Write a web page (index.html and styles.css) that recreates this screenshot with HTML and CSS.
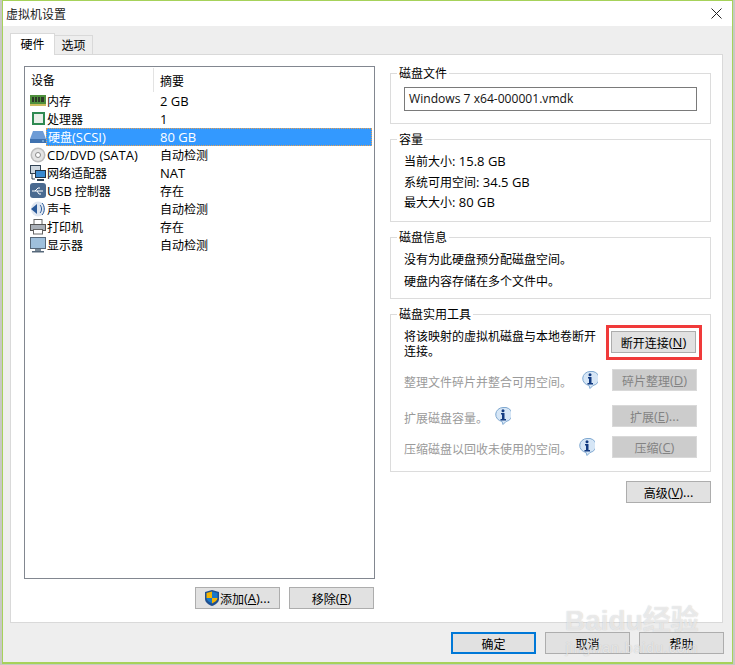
FILE: index.html
```html
<!DOCTYPE html>
<html lang="zh-CN">
<head>
<meta charset="utf-8">
<title>虚拟机设置</title>
<link rel="stylesheet" href="styles.css">
</head>
<body>
<div class="window">
  <header class="titlebar">
    <span class="title">虚拟机设置</span>
    <svg class="close" width="11" height="11" viewBox="0 0 11 11"><path d="M.5.5l10 10M10.500.5l-10 10" stroke="#222" fill="none"/></svg>
  </header>
  <div class="body">
    <nav class="tabs">
      <span class="tab active">硬件</span>
      <span class="tab">选项</span>
    </nav>
    <main class="panel">
      <section class="left">
        <div class="list">
          <div class="list-head"><span class="col1">设备</span><span class="col2">摘要</span></div>
          <div class="row"><span class="col1"><svg class="ic" viewBox="0 0 16 16"><rect x="0" y="2" width="16" height="9" fill="#4e8f3c"/><path d="M2 4h2v5H2zM5 4h2v5H5zM8 4h2v5H8zM11 4h3v5h-3z" fill="#2d3a28"/><rect x="0" y="11" width="16" height="2" fill="#c9bb5e"/></svg><span>内存</span></span><span class="col2 lat">2 GB</span></div>
          <div class="row"><span class="col1"><svg class="ic" viewBox="0 0 16 16"><rect x="2" y="1" width="13" height="13" fill="#2f8a52"/><rect x="4" y="3" width="9" height="9" fill="#e9efe9"/></svg><span>处理器</span></span><span class="col2 lat">1</span></div>
          <div class="row selected"><span class="col1"><svg class="ic" viewBox="0 0 16 16"><path d="M3 2h10l3 8v4H0v-4z" fill="#6d9cd6"/><path d="M0 10h16v4H0z" fill="#3f72b0"/><path d="M12 11.500h2v1h-2z" fill="#9fd0f5"/></svg><span class="sel-bar"><span class="sel-text">硬盘<span class="lat">(SCSI)</span></span><span class="sel-val lat">80 GB</span></span></span></div>
          <div class="row"><span class="col1"><svg class="ic" viewBox="0 0 16 16"><circle cx="8" cy="8" r="7.500" fill="#bdbdbd"/><circle cx="8" cy="8" r="6" fill="#e4e4e4"/><circle cx="8" cy="8" r="2.500" fill="#fff" stroke="#8a8a8a"/></svg><span class="lat">CD/DVD (SATA)</span></span><span class="col2">自动检测</span></div>
          <div class="row"><span class="col1"><svg class="ic" viewBox="0 0 16 16"><rect x="0.500" y="0.500" width="10" height="8" fill="#cfd8e0" stroke="#345"/><rect x="5.500" y="5.500" width="10" height="7" fill="#3a8ad0" stroke="#234"/><path d="M7 15h7" stroke="#345" stroke-width="2"/><path d="M2 9v5h3" stroke="#345" fill="none"/></svg><span>网络适配器</span></span><span class="col2 lat">NAT</span></div>
          <div class="row"><span class="col1"><svg class="ic" viewBox="0 0 16 16"><rect width="16" height="15" rx="3" fill="#4a6a90"/><path d="M2 8h11M5 8l3-3h2M7 8l2 3h2" stroke="#fff" fill="none"/></svg><span><span class="lat">USB</span> 控制器</span></span><span class="col2">存在</span></div>
          <div class="row"><span class="col1"><svg class="ic" viewBox="0 0 16 16"><ellipse cx="8" cy="8" rx="7" ry="7.500" fill="#dfe6f0"/><path d="M1 8l6-5v10z" fill="#2a5a9a"/><path d="M10 4c2 2 2 6 0 8M12 2c3 3 3 9 0 12" stroke="#2a5a9a" fill="none"/></svg><span>声卡</span></span><span class="col2">自动检测</span></div>
          <div class="row"><span class="col1"><svg class="ic" viewBox="0 0 16 16"><rect x="4" y="0.500" width="8" height="5" fill="#fff" stroke="#666"/><rect x="0.500" y="5.500" width="15" height="6" fill="#aab0b8" stroke="#555"/><rect x="3.500" y="10.500" width="9" height="4.500" fill="#fff" stroke="#666"/></svg><span>打印机</span></span><span class="col2">存在</span></div>
          <div class="row"><span class="col1"><svg class="ic" viewBox="0 0 16 16"><rect x="0.500" y="0.500" width="15" height="11" fill="#9fc0dc" stroke="#56687a"/><path d="M5 12h6v2H5z" fill="#7a8a98"/><path d="M2 14h12v1.500H2z" fill="#56687a"/></svg><span>显示器</span></span><span class="col2">自动检测</span></div>
        </div>
        <div class="list-actions">
          <button class="btn"><svg class="shield" viewBox="0 0 14 16"><path d="M7 0l7 2v7c0 3-3 5.500-7 7-4-1.500-7-4-7-7V2z" fill="#1f4f8f"/><path d="M7 1.500V8H1.500V3z" fill="#f4b400"/><path d="M7 8h5.500c-.3 2.500-2.500 4-5.500 5.500z" fill="#f4b400"/><path d="M7 1.500l5.500 1.500v5H7z" fill="#1a78c8"/><path d="M1.500 8H7v5.500C4 12 1.800 10.500 1.500 8z" fill="#1a78c8"/></svg>添加<span class="lat">(<u>A</u>)...</span></button>
          <button class="btn">移除<span class="lat">(<u>R</u>)</span></button>
        </div>
      </section>
      <section class="right">
        <fieldset class="group g-file">
          <legend>磁盘文件</legend>
          <div class="input">Windows 7 x64-000001.vmdk</div>
        </fieldset>
        <fieldset class="group g-cap">
          <legend>容量</legend>
          <p>当前大小<span class="lat">: 15.8 GB</span></p>
          <p>系统可用空间<span class="lat">: 34.5 GB</span></p>
          <p>最大大小<span class="lat">: 80 GB</span></p>
        </fieldset>
        <fieldset class="group g-info">
          <legend>磁盘信息</legend>
          <p>没有为此硬盘预分配磁盘空间。</p>
          <p>硬盘内容存储在多个文件中。</p>
        </fieldset>
        <fieldset class="group g-util">
          <legend>磁盘实用工具</legend>
          <div class="util first">
            <span class="util-text wrap">将该映射的虚拟机磁盘与本地卷断开连接。</span>
            <span class="highlight"><button class="btn">断开连接<span class="lat">(<u>N</u>)</span></button></span>
          </div>
          <div class="util off u2">
            <span class="util-text">整理文件碎片并整合可用空间。</span>
            <svg class="info i1" viewBox="0 0 16 18"><path d="M8 .5a7.500 7 0 0 1 3 14L8 17.500l-1-3.100A7.500 7 0 0 1 8 .5z" fill="#d6e6f6" stroke="#7fa8d0"/><circle cx="8" cy="3.800" r="1.500" fill="#123a80"/><path d="M6 6h3.500v6H11v1.500H5.500V12H7V7.500H6z" fill="#123a80"/></svg>
            <button class="btn" disabled>碎片整理<span class="lat">(<u>D</u>)</span></button>
          </div>
          <div class="util off u3">
            <span class="util-text">扩展磁盘容量。</span>
            <svg class="info i2" viewBox="0 0 16 18"><path d="M8 .5a7.500 7 0 0 1 3 14L8 17.500l-1-3.100A7.500 7 0 0 1 8 .5z" fill="#d6e6f6" stroke="#7fa8d0"/><circle cx="8" cy="3.800" r="1.500" fill="#123a80"/><path d="M6 6h3.500v6H11v1.500H5.500V12H7V7.500H6z" fill="#123a80"/></svg>
            <button class="btn" disabled>扩展<span class="lat">(<u>E</u>)...</span></button>
          </div>
          <div class="util off u4">
            <span class="util-text">压缩磁盘以回收未使用的空间。</span>
            <svg class="info i3" viewBox="0 0 16 18"><path d="M8 .5a7.500 7 0 0 1 3 14L8 17.500l-1-3.100A7.500 7 0 0 1 8 .5z" fill="#d6e6f6" stroke="#7fa8d0"/><circle cx="8" cy="3.800" r="1.500" fill="#123a80"/><path d="M6 6h3.500v6H11v1.500H5.500V12H7V7.500H6z" fill="#123a80"/></svg>
            <button class="btn" disabled>压缩<span class="lat">(<u>C</u>)</span></button>
          </div>
        </fieldset>
        <div class="adv-row"><button class="btn">高级<span class="lat">(<u>V</u>)...</span></button></div>
      </section>
    </main>
    <footer class="footer">
      <button class="btn primary">确定</button>
      <button class="btn">取消</button>
      <button class="btn">帮助</button>
    </footer>
  </div>
</div>
<div class="watermark"><div class="wm-big">Baidu经验</div><div class="wm-small">jingwan.baidu.com</div></div>
</body>
</html>
```

FILE: styles.css
```css
* { box-sizing: border-box; }
html, body { margin: 0; height: 100%; }
body {
  width: 735px; height: 665px; overflow: hidden; position: relative;
  background: #c8c8c4; padding: 0 2px;
  font: 12px "Noto Sans CJK SC", sans-serif; color: #000;
}
.lat { font-family: "Open Sans", sans-serif; font-size: 13px; }
.window {
  height: 664px; display: flex; flex-direction: column;
  border: 1px solid #a6d25a; border-width: 1px 1px 2px 1px;
  background: #eee;
}
.titlebar { height: 25px; background: #fff; display: flex; align-items: center; justify-content: space-between; padding: 0 10px 0 3px; flex: none; }
.title { font-size: 12px; color: #222; }
.close { display: block; }
.body { flex: 1; display: flex; flex-direction: column; padding: 7px 9px 0 7px; min-height: 0; }
.tabs { display: flex; height: 21px; align-items: flex-end; flex: none; }
.tab { height: 19px; width: 38px; background: #eee; border: 1px solid #d9d9d9; border-bottom: 0; border-left: 0; text-align: center; line-height: 17px; }
.tab.active { height: 22px; width: 45px; margin-bottom: -1px; background: #fff; border-left: 1px solid #d9d9d9; position: relative; z-index: 1; line-height: 20px; }
.panel { height: 569px; flex: none; background: #fff; border: 1px solid #d9d9d9; display: flex; padding: 11px 11px 0 13px; }
.left { width: 351px; flex: none; }
.list { height: 513px; border: 1px solid #828790; padding: 1px; }
.list-head { display: flex; height: 24px; align-items: center; }
.list-head .col1 { padding-left: 5px; width: 128px; height: 24px; border-right: 1px solid #e3e3e3; line-height: 24px; }
.list-head .col2 { padding-left: 6px; }
.row { display: flex; height: 18px; line-height: 18px; }
.row .col1 { display: flex; align-items: center; width: 128px; padding-left: 4px; flex: none; }
.row .col2 { padding-left: 6px; flex: 1; }
.selected .col1 { width: 100%; }
.ic { width: 16px; height: 16px; margin-right: 1px; flex: none; }
.selected .ic { margin-right: 0; }
.sel-bar { flex: 1; display: flex; height: 18px; margin-right: 1px; background: #3399ff; color: #fff; outline: 1px dotted #e8a050; outline-offset: -1px; }
.sel-text { width: 114px; padding-left: 2px; }
.list-actions { display: flex; justify-content: flex-end; gap: 9px; margin-top: 8px; padding-right: 1px; }
.btn {
  width: 85px; height: 22px; padding: 0; background: #e1e1e1; border: 1px solid #adadad;
  font: 12px "Noto Sans CJK SC", sans-serif; color: #000;
  display: inline-flex; align-items: center; justify-content: center; flex: none;
}
.btn:disabled { background: #ccc; border-color: #d9d9d9; color: #838383; }
.shield { width: 14px; height: 16px; margin-right: 1px; }
.right { width: 321px; flex: none; margin-left: 15px; }
.group { margin: 0; padding: 0 13px; border: 1px solid #dcdcdc; min-width: 0; }
.group legend { padding: 0 2px; margin-left: -7px; line-height: 14px; height: 14px; }
.group p { margin: 0; }
.g-file { height: 58px; }
.g-cap { height: 90px; margin-top: 8px; }
.g-cap p { line-height: 20.500px; }
.g-cap legend { margin-bottom: 5px; }
.g-info { height: 69px; margin-top: 8px; }
.g-info p { line-height: 22px; }
.g-info legend { margin-bottom: 4px; }
.g-util { height: 165px; margin-top: 8px; padding: 0 13px; }
.g-util legend { margin-bottom: 4px; }
.g-file legend { margin-bottom: 7px; }
.input { height: 24px; border: 1px solid #7a7a7a; line-height: 21px; padding-left: 4px; font-family: "Open Sans", sans-serif; font-size: 12.100px; color: #111; }
.util { display: flex; align-items: center; }
.util-text { flex: none; }
.off .util-text { color: #9a9a9a; padding-top: 2px; }
.first { height: 35px; justify-content: space-between; align-items: flex-start; }
.wrap { width: 194px; line-height: 15px; margin-top: 3px; }
.highlight { border: 3px solid #f03a3a; padding: 3px 3px 4px 2px; display: block; margin-right: -5px; }
.util.off .btn { margin-left: auto; }
.u2 { height: 22px; margin-top: 9px; }
.u3 { height: 22px; margin-top: 14px; }
.u4 { height: 22px; margin-top: 9px; }
.info { width: 16px; height: 18px; flex: none; }
.i1 { margin-left: 10px; }
.i2 { margin-left: 7px; }
.i3 { margin-left: 7px; }
.adv-row { display: flex; justify-content: flex-end; margin-top: 9px; }
.footer { display: flex; justify-content: flex-end; gap: 9px; margin: 9px -1px 0 0; }
.primary { border: 2px solid #0078d7; }
.watermark { position: absolute; left: 565px; top: 598px; color: rgba(255,255,255,.6); text-shadow: 0 0 1px rgba(130,130,130,.45); pointer-events: none; line-height: 1; text-align: center; }
.wm-big { font: 700 28px "Liberation Sans", "Noto Sans CJK SC", sans-serif; }
.wm-small { font: 14px "Liberation Sans", sans-serif; margin-top: 2px; letter-spacing: 1px; }
```
